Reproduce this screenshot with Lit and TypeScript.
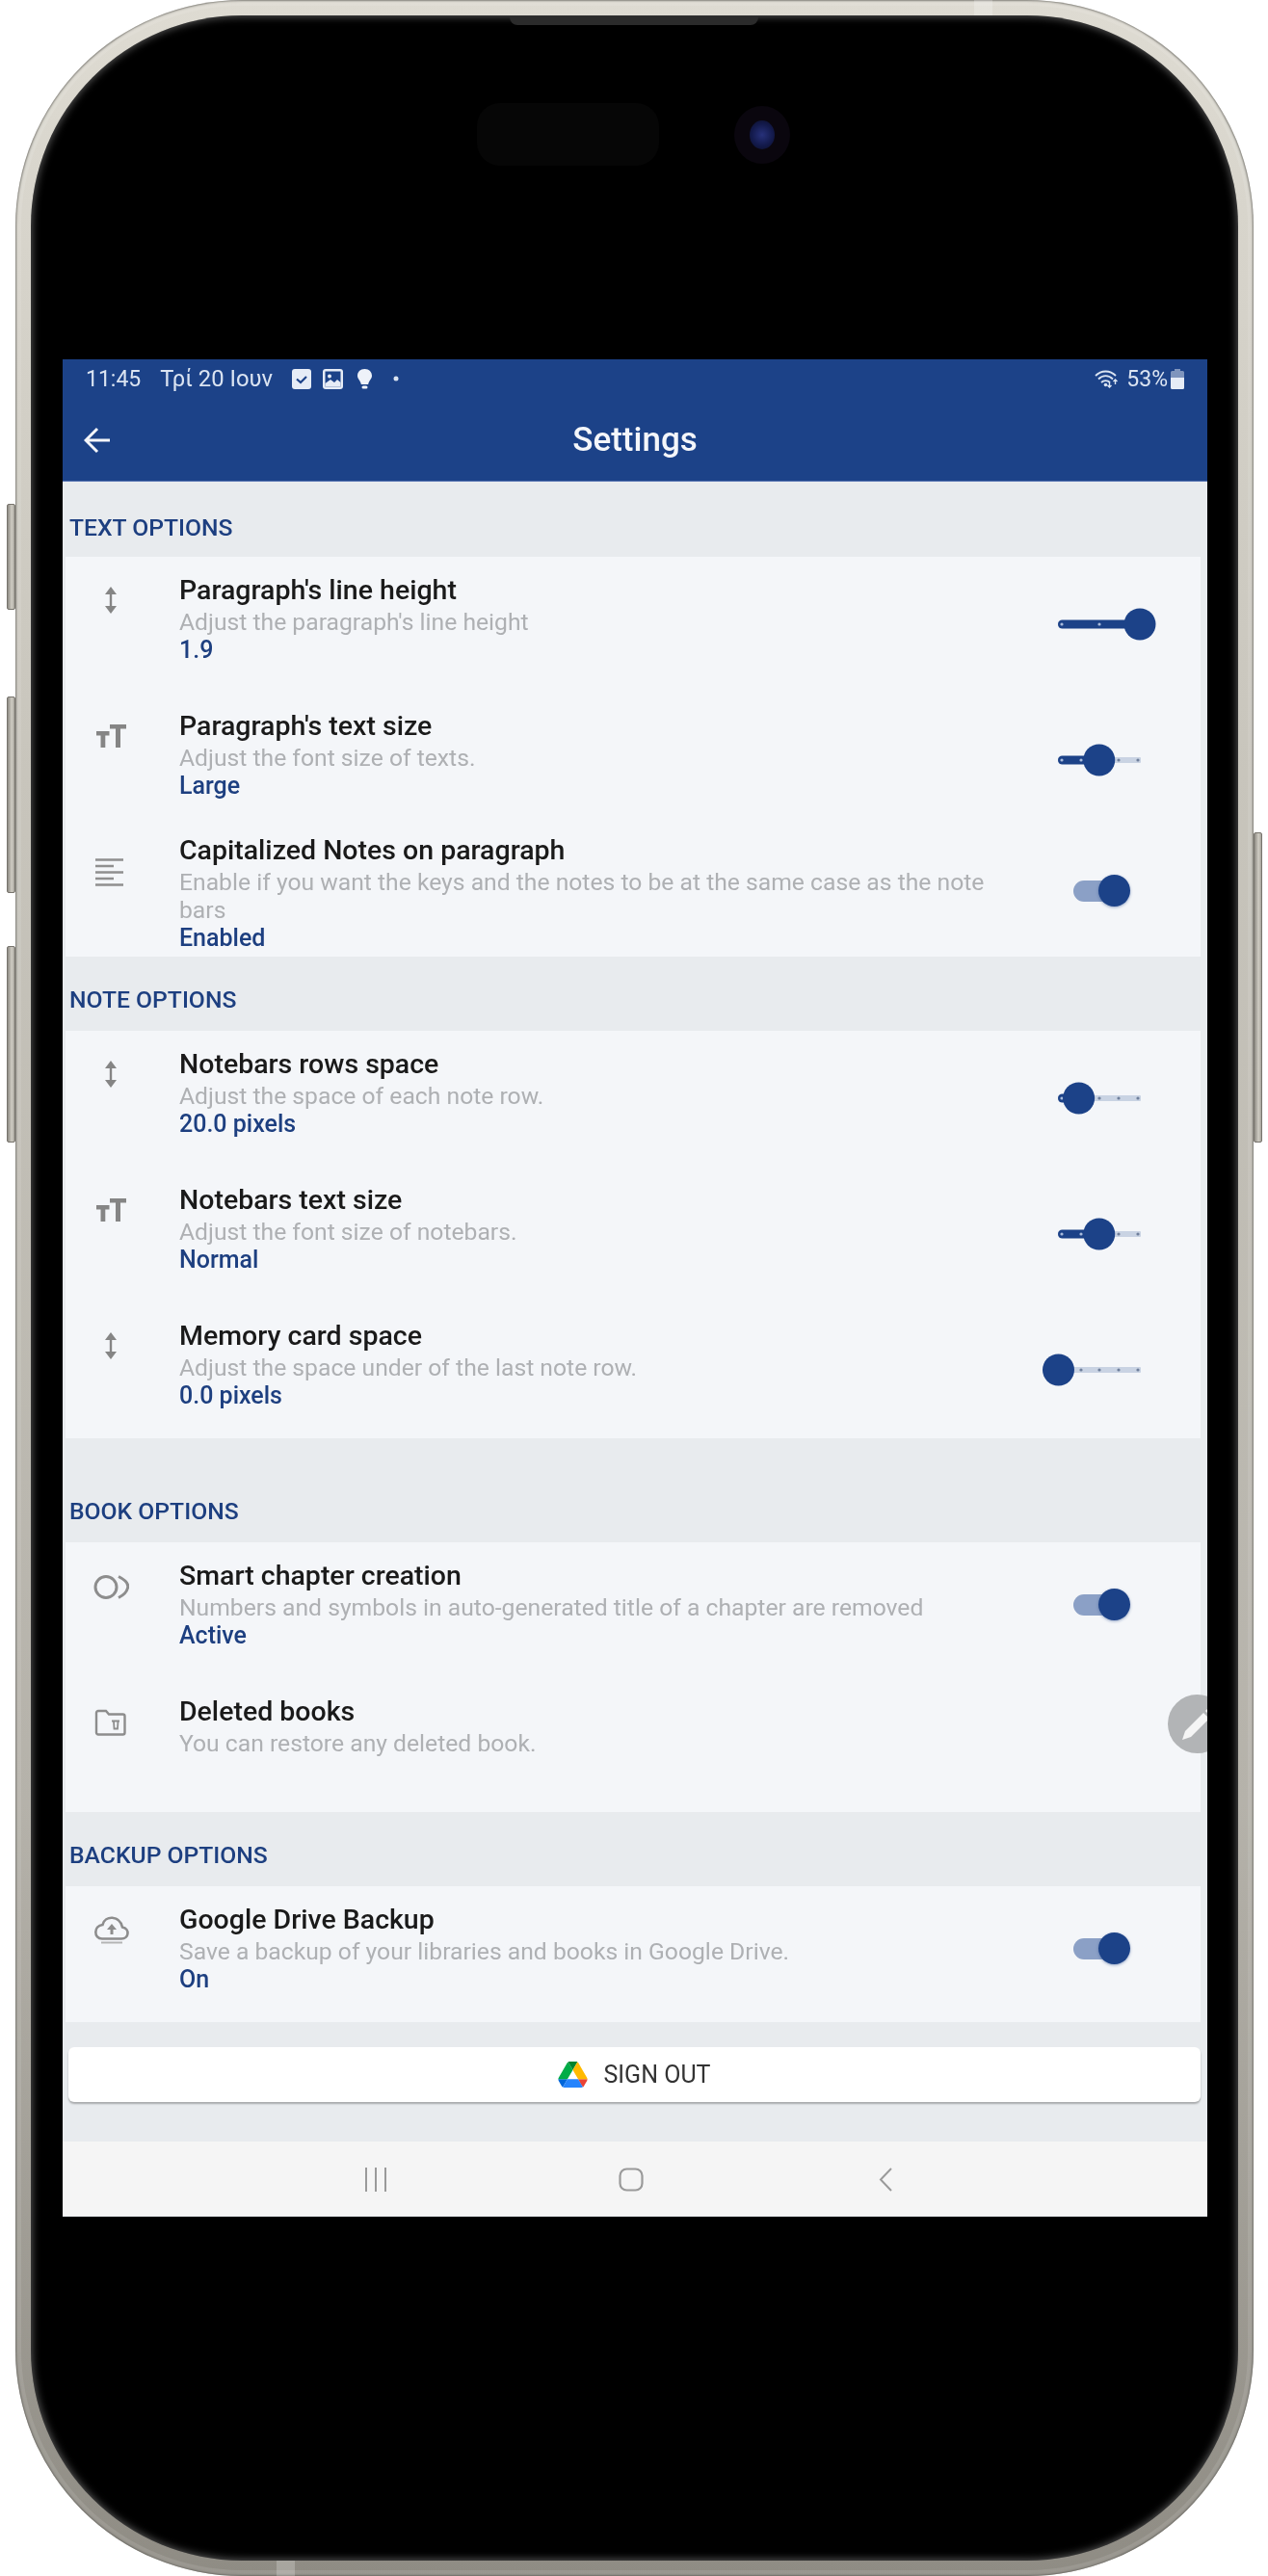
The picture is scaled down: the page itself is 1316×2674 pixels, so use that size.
import { LitElement, html, css, svg } from "lit";
import { customElement } from "lit/decorators.js";

type Ctl = { kind: "slider"; v: number } | { kind: "toggle"; low?: boolean } | { kind: "none" };
type Row = { icon: string; title: string; sub: string; value?: string; pad: string; ctl: Ctl };
type Section = { label: string; wide?: boolean; rows: Row[] };

const SECTIONS: Section[] = [
  {
    label: "TEXT OPTIONS",
    rows: [
      { icon: "arrows", title: "Paragraph's line height", sub: "Adjust the paragraph's line height", value: "1.9", pad: "p-wide", ctl: { kind: "slider", v: 1 } },
      { icon: "tt", title: "Paragraph's text size", sub: "Adjust the font size of texts.", value: "Large", pad: "p-mid", ctl: { kind: "slider", v: 0.5 } },
      { icon: "list", title: "Capitalized Notes on paragraph", sub: "Enable if you want the keys and the notes to be at the same case as the note bars", value: "Enabled", pad: "p-tight", ctl: { kind: "toggle", low: true } },
    ],
  },
  {
    label: "NOTE OPTIONS",
    rows: [
      { icon: "arrows", title: "Notebars rows space", sub: "Adjust the space of each note row.", value: "20.0 pixels", pad: "p-wide", ctl: { kind: "slider", v: 0.25 } },
      { icon: "tt", title: "Notebars text size", sub: "Adjust the font size of notebars.", value: "Normal", pad: "p-wide", ctl: { kind: "slider", v: 0.5 } },
      { icon: "arrows", title: "Memory card space", sub: "Adjust the space under of the last note row.", value: "0.0 pixels", pad: "p-end", ctl: { kind: "slider", v: 0 } },
    ],
  },
  {
    label: "BOOK OPTIONS",
    wide: true,
    rows: [
      { icon: "circles", title: "Smart chapter creation", sub: "Numbers and symbols in auto-generated title of a chapter are removed", value: "Active", pad: "p-wide", ctl: { kind: "toggle" } },
      { icon: "folder", title: "Deleted books", sub: "You can restore any deleted book.", pad: "p-none", ctl: { kind: "none" } },
    ],
  },
  {
    label: "BACKUP OPTIONS",
    rows: [
      { icon: "cloud", title: "Google Drive Backup", sub: "Save a backup of your libraries and books in Google Drive.", value: "On", pad: "p-wide", ctl: { kind: "toggle" } },
    ],
  },
];

const ICONS: Record<string, unknown> = {
  arrows: html`<svg class="i-arrows" width="16" height="30" viewBox="0 0 16 30"><path d="M8 1 14 9H2zM8 29 2 21H14z" fill="#858585"/><path d="M8 6V24" stroke="#858585" stroke-width="2.400"/></svg>`,
  tt: html`<svg class="i-tt" width="31" height="24" viewBox="0 0 31 24" fill="#858585"><path d="M14 0H31V4.500H25V24H20V4.500H14zM0 7H13.500V11.500H9.300V24H4.500V11.500H0z"/></svg>`,
  list: html`<svg class="i-list" width="30" height="29" viewBox="0 0 30 29" stroke="#8f8f8f" stroke-width="2.600"><path d="M0 1.500H29M0 8H19M0 14.500H29M0 21H19M0 27.500H29"/></svg>`,
  circles: html`<svg class="i-circles" width="37" height="27" viewBox="0 0 37 27" fill="none" stroke="#8d8d8d" stroke-width="3"><circle cx="13" cy="13.500" r="11"/><path d="M26 2.500C33 6 37 10 35.500 14.500 34.500 18.500 31 22 26 24.500"/></svg>`,
  folder: html`<svg class="i-folder" width="33" height="28" viewBox="0 0 33 28" fill="none" stroke="#8d8d8d" stroke-width="2.400"><path d="M2 4a2 2 0 0 1 2-2H12L15 5.500H29.500a2 2 0 0 1 2 2V24.500a2 2 0 0 1-2 2H4a2 2 0 0 1-2-2z"/><path d="M18 12.500H26M20 12.500 20.500 20.500H24L24.500 12.500" stroke-width="1.800"/></svg>`,
  cloud: html`<svg class="i-cloud" width="38" height="29" viewBox="0 0 38 29" fill="none" stroke="#8d8d8d" stroke-width="2.600"><path d="M9 23.500H29C37 23.500 38 13 30 11.500 27 -1 12 -1 9.500 9 0 10 0 23.500 9 23.500Z"/><path d="M19 8 24 14H20.500V19H17.500V14H14Z" fill="#8d8d8d" stroke="none"/><path d="M8 27.500H30" stroke-width="2" stroke="#b4b4b4"/></svg>`,
};

@customElement("app-root")
export class AppRoot extends LitElement {
  static styles = css`
    :host { display: block; width: 1316px; height: 2674px; background: #fff; font-family: Roboto, "Noto Sans", sans-serif; overflow: hidden; }
    .stage { position: relative; width: 1316px; height: 2674px; padding-left: 16px; box-sizing: border-box; }
    .phone { width: 1285px; height: 2674px; box-sizing: border-box; padding: 16px; border-radius: 235px; background: linear-gradient(180deg, #dedbd2 0%, #c8c5bc 30%, #b5b2aa 70%, #8f8c84 100%); box-shadow: inset 0 0 2px 1px rgba(90, 88, 82, 0.7), inset 0 0 0 6px rgba(255, 255, 255, 0.1); position: relative; }
    .bezel { position: relative; height: 2642px; box-sizing: border-box; padding: 357px 32px 0 33px; border-radius: 219px; background: #000; box-shadow: inset 0 0 9px 1px rgba(255, 255, 255, 0.36); }
    .btn { position: absolute; width: 9px; background: linear-gradient(90deg, #8e8b84, #d0cdc4 60%, #a5a29a); border-radius: 2px; border: 1px solid #77746d; box-sizing: border-box; }
    .b1 { left: 7px; top: 523px; height: 110px; }
    .b2 { left: 7px; top: 723px; height: 204px; }
    .b3 { left: 7px; top: 982px; height: 204px; }
    .b4 { left: 1301px; top: 864px; height: 322px; }
    .ant { position: absolute; background: rgba(255, 255, 255, 0.22); }
    .a1 { left: 995px; top: 0; width: 19px; height: 16px; }
    .a2 { left: 271px; bottom: 0; width: 19px; height: 16px; }
    .speaker { position: absolute; left: 497px; top: 1px; width: 258px; height: 9px; background: #2b2b2b; border-radius: 0 0 8px 8px; }
    .pill { position: absolute; left: 463px; top: 91px; width: 189px; height: 65px; border-radius: 24px; background: #060606; }
    .lens { position: absolute; left: 730px; top: 94px; width: 58px; height: 60px; border-radius: 50%; background: #0a060e; display: flex; align-items: center; justify-content: center; }
    .lens i { display: block; width: 26px; height: 30px; border-radius: 50%; background: radial-gradient(circle, #27317a 0%, #131a4c 55%, #0b0d24 100%); }

    .screen { position: relative; width: 1188px; height: 1928px; background: #e8ebee; overflow: hidden; filter: blur(0.45px); }
    .head { background: #1c4288; color: #fff; border-bottom: 1px solid #5c78b4; box-sizing: border-box; height: 127px; }
    .status { height: 40px; display: flex; align-items: center; padding: 0 24px 0 24px; font-size: 23px; color: #dbe4f2; }
    .status .date { margin-left: 20px; font-size: 23.800px; }
    .status .icons { display: flex; align-items: center; margin-left: 20px; gap: 12px; }
    .spacer { flex: 1; }
    .status .pct { margin: 0 3px 0 7px; }
    .bar { height: 87px; display: grid; grid-template-columns: 1fr auto 1fr; align-items: center; padding: 0 22px; }
    .bar h1 { margin: 0; font-size: 35px; font-weight: 500; color: #f4f6fa; line-height: 40px; }

    .label { margin: 0; padding: 30px 0 17px 7px; font-size: 24.700px; line-height: 30px; font-weight: 500; color: #1d3f80; }
    .first .label { padding-top: 33px; padding-bottom: 15px; }
    .wide .label { padding-top: 61px; }
    .card { margin: 0 7px 0 3px; background: #f4f6f9; }
    .row { display: grid; grid-template-columns: 118px 897px 1fr; padding-top: 18px; }
    .p-wide { padding-bottom: 30px; }
    .p-mid { padding-bottom: 18px; }
    .p-tight { padding-bottom: 5px; }
    .p-end { padding-bottom: 30px; }
    .p-none { padding-bottom: 57px; }
    .ico { display: flex; justify-content: center; width: 94px; }
    .ico svg { display: block; }
    .i-arrows { margin-top: 12px; }
    .i-tt { margin-top: 15px; }
    .i-list { margin-top: 25px; margin-left: -3px; }
    .i-circles { margin-top: 15px; margin-left: 1px; }
    .i-folder { margin-top: 14px; margin-left: -2px; }
    .i-cloud { margin-top: 13px; margin-left: 1px; }
    .title { font-size: 28.500px; font-weight: 500; line-height: 33px; color: #1a1a1a; margin-bottom: 2px; }
    .sub { font-size: 24.700px; line-height: 29px; color: #aeb0b3; max-width: 860px; }
    .value { font-size: 25px; line-height: 29px; font-weight: 500; color: #1d3f80; }
    .slider { display: block; margin: 35px 0 0 -1px; }
    .toggle { position: relative; margin: 30px 0 0 31px; width: 50px; height: 33px; }
    .toggle.low { margin-top: 42px; }
    .toggle .track { position: absolute; left: 0; top: 6px; width: 50px; height: 22px; border-radius: 11px; background: #8ba0c6; }
    .toggle .thumb { position: absolute; left: 26px; top: 0; width: 33px; height: 33px; border-radius: 50%; background: #1c4288; box-shadow: 0 1px 3px rgba(28, 66, 136, 0.45); }

    .signout { margin: 26px 7px 41px 6px; height: 57px; background: #fff; border-radius: 6px; box-shadow: 0 2px 2px rgba(0, 0, 0, 0.28); display: flex; align-items: center; justify-content: center; gap: 16px; font-size: 25px; color: #333; }
    .nav { height: 77px; background: #f5f5f5; display: grid; grid-template-columns: 313px 24px 240px 26px 244px 14px; align-items: start; padding-top: 27px; box-sizing: border-box; }
    .nav svg { display: block; }
    .fab { position: absolute; left: 1147px; top: 1386px; width: 61px; height: 61px; border-radius: 50%; background: #b2b4b6; display: flex; align-items: center; justify-content: flex-start; }
    .fab svg { margin-left: 15px; }
  `;

  private slider(v: number) {
    const cx = 16.5 + v * 84.5;
    const ticks = v === 1 ? [20, 59] : [20, 40, 59, 79, 99];
    return html`<svg class="slider" width="120" height="34" viewBox="0 0 120 34">
      <rect x="16" y="14" width="86" height="6" rx="1" fill="#c9d3e3"></rect>
      <rect x="16" y="12.500" width="${Math.max(cx - 16, 0)}" height="9" rx="4.500" fill="#1c4288"></rect>
      ${ticks.map((t) => svg`<circle cx="${t}" cy="17" r="1.600" fill="${t < cx ? "#a9bbdc" : "#6f7f9c"}"></circle>`)}
      <circle cx="${cx}" cy="17" r="16.500" fill="#1c4288"></circle>
    </svg>`;
  }

  private control(c: Ctl) {
    if (c.kind === "slider") return this.slider(c.v);
    if (c.kind === "toggle")
      return html`<div class="toggle ${c.low ? "low" : ""}"><div class="track"></div><div class="thumb"></div></div>`;
    return html``;
  }

  render() {
    return html`<div class="stage">
      <div class="btn b1"></div><div class="btn b2"></div><div class="btn b3"></div><div class="btn b4"></div>
      <div class="phone">
        <div class="ant a1"></div><div class="ant a2"></div>
        <div class="bezel">
          <div class="speaker"></div>
          <div class="pill"></div>
          <div class="lens"><i></i></div>
          <div class="screen">
            <header class="head">
              <div class="status">
                <span>11:45</span><span class="date">Τρί 20 Ιουν</span>
                <span class="icons">
                  <svg width="20" height="21" viewBox="0 0 20 21"><rect width="20" height="21" rx="3" fill="#e6ecf6"/><path d="M5 10.500 9 14 15 8" fill="none" stroke="#1c4288" stroke-width="2.200"/></svg>
                  <svg width="21" height="21" viewBox="0 0 21 21"><rect width="21" height="21" rx="3" fill="#e6ecf6"/><rect x="2.500" y="2.500" width="16" height="16" fill="#1c4288"/><circle cx="7" cy="7.500" r="2" fill="#e6ecf6"/><path d="M2.500 18.500V15L8 11 12 14 15 11 18.500 14V18.500Z" fill="#e6ecf6"/></svg>
                  <svg width="17" height="21" viewBox="0 0 17 21" style="margin-left:2px"><path d="M8.500 0C3.800 0 1 3.300 1 7c0 3.500 3.200 5 3.800 9h7.400c.6-4 3.800-5.500 3.800-9 0-3.700-2.800-7-7.500-7z" fill="#eef2f9"/><rect x="5.500" y="17.500" width="6" height="3" rx="1.500" fill="#eef2f9"/></svg>
                  <svg width="6" height="6" viewBox="0 0 6 6" style="margin-left:9px"><circle cx="3" cy="3" r="2.500" fill="#dbe4f2"/></svg>
                </span>
                <span class="spacer"></span>
                <svg width="26" height="19" viewBox="0 0 26 19" fill="none" stroke="#dbe4f2" stroke-width="1.800"><path d="M1 6C7 0 16 0 22 6M4 9.500C8.500 5 14.500 5 19 9.500M7 13C9.500 10.500 13.500 10.500 16 13"/><circle cx="11.500" cy="15.500" r="1.800" fill="#dbe4f2" stroke="none"/><path d="M21.500 10V15M19.500 12 21.500 10 23.500 12M15.500 13V18M17.500 16 15.500 18 13.500 16" stroke-width="1.400"/></svg>
                <span class="pct">53%</span>
                <svg width="14" height="21" viewBox="0 0 14 21"><path d="M4 0H10V2H12.500A1.500 1.500 0 0 1 14 3.500V9H0V3.500A1.500 1.500 0 0 1 1.500 2H4Z" fill="#7f95bd"/><path d="M0 9H14V19.500A1.500 1.500 0 0 1 12.500 21H1.500A1.500 1.500 0 0 1 0 19.500Z" fill="#e6ecf6"/></svg>
              </div>
              <div class="bar">
                <svg width="28" height="28" viewBox="0 0 28 28" fill="none" stroke="#f4f6fa" stroke-width="3"><path d="M27 14H3M14 2 2 14 14 26"/></svg>
                <h1>Settings</h1>
              </div>
            </header>
            ${SECTIONS.map(
              (s, i) => html`<section class="${i === 0 ? "first" : ""} ${s.wide ? "wide" : ""}">
                <h2 class="label">${s.label}</h2>
                <div class="card">
                  ${s.rows.map(
                    (r) => html`<div class="row ${r.pad}">
                      <div class="ico">${ICONS[r.icon]}</div>
                      <div>
                        <div class="title">${r.title}</div>
                        <div class="sub">${r.sub}</div>
                        ${r.value ? html`<div class="value">${r.value}</div>` : ""}
                      </div>
                      <div>${this.control(r.ctl)}</div>
                    </div>`
                  )}
                </div>
              </section>`
            )}
            <div class="signout">
              <svg width="31" height="27" viewBox="0 0 87.300 78">
                <path d="m6.600 66.850 3.850 6.650c.8 1.400 1.950 2.500 3.300 3.300l13.750-23.800h-27.500c0 1.550.4 3.100 1.200 4.500z" fill="#0066da"/>
                <path d="m43.650 25-13.750-23.800c-1.350.8-2.500 1.900-3.300 3.300l-25.400 44a9.060 9.060 0 0 0 -1.200 4.500h27.500z" fill="#00ac47"/>
                <path d="m73.550 76.800c1.350-.8 2.500-1.900 3.300-3.300l1.600-2.750 7.650-13.250c.8-1.400 1.200-2.950 1.200-4.500h-27.502l5.852 11.500z" fill="#ea4335"/>
                <path d="m43.650 25 13.750-23.800c-1.350-.8-2.900-1.200-4.500-1.200h-18.500c-1.600 0-3.150.45-4.500 1.200z" fill="#00832d"/>
                <path d="m59.800 53h-32.300l-13.750 23.800c1.350.8 2.900 1.200 4.500 1.200h50.800c1.600 0 3.150-.45 4.500-1.200z" fill="#2684fc"/>
                <path d="m73.400 26.500-12.700-22c-.8-1.400-1.950-2.500-3.300-3.300l-13.750 23.800 16.150 28h27.450c0-1.550-.4-3.100-1.200-4.500z" fill="#ffba00"/>
              </svg>
              <span>SIGN OUT</span>
            </div>
            <nav class="nav">
              <span></span>
              <svg width="24" height="25" viewBox="0 0 24 25" stroke="#9a9a9a" stroke-width="2"><path d="M2 0V25M12 0V25M22 0V25"/></svg>
              <span></span>
              <svg width="26" height="25" viewBox="0 0 26 25" fill="none" stroke="#9a9a9a" stroke-width="2.200"><rect x="1.500" y="1.500" width="23" height="22" rx="7"/></svg>
              <span></span>
              <svg width="14" height="25" viewBox="0 0 14 25" fill="none" stroke="#9a9a9a" stroke-width="2"><path d="M13 1 2 12.500 13 24"/></svg>
            </nav>
            <div class="fab">
              <svg width="32" height="32" viewBox="0 0 32 32"><path d="M0 32 3 23 22 4 28 10 9 29Z M24 2 26 0 32 6 30 8Z" fill="#f5f5f5"/></svg>
            </div>
          </div>
        </div>
      </div>
    </div>`;
  }
}
